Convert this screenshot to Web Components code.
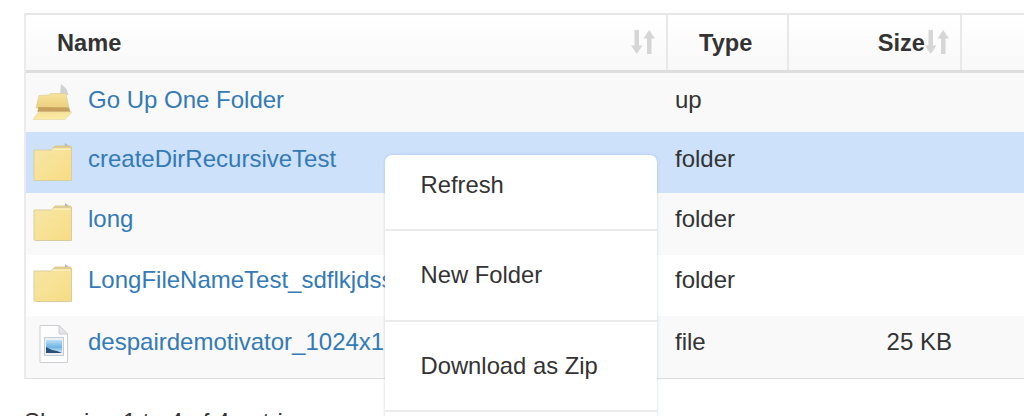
<!DOCTYPE html>
<html><head><meta charset="utf-8"><title>File browser</title>
<style>
html,body{margin:0;height:416px;overflow:hidden;background:#fff}
body{font:24px "Liberation Sans",Arial,sans-serif;color:#333}
</style></head><body>
<file-page></file-page>
<script>
const $t=(h)=>{const t=document.createElement('template');t.innerHTML=h;return t;};
const def=(n,h,init)=>customElements.define(n,class extends HTMLElement{
  constructor(){super();this.attachShadow({mode:'open'}).appendChild($t(h).content.cloneNode(true));}
  connectedCallback(){init&&init.call(this,this.shadowRoot);}
});
const FOLDER=`<svg width="42" height="42" viewBox="0 0 42 42">
<defs><linearGradient id="f1" x1="0" y1="0" x2="1" y2="1"><stop offset="0" stop-color="#f6e7a6"/><stop offset="1" stop-color="#f8dc84"/></linearGradient></defs>
<path d="M33 3l5 4 1.500 4h-7z" fill="#a9b4c6"/>
<path d="M21 8l2-2h15c.8 0 1.500.7 1.500 1.500V11H20z" fill="#f0d27a" stroke="#d5c184" stroke-width=".8"/>
<path d="M2 10h17.500l3-2.500h15.500c.8 0 1.500.7 1.500 1.500v31.500H3.500c-.8 0-1.500-.7-1.500-1.500z" fill="url(#f1)" stroke="#d8cda0" stroke-width="1"/>
<path d="M21 8.500h17v1.500H20z" fill="#fbeeb8"/>
</svg>`;
const OPEN=`<svg width="42" height="42" viewBox="0 0 42 42">
<defs><linearGradient id="o1" x1="0" y1="0" x2="0.2" y2="1"><stop offset="0" stop-color="#f8e394"/><stop offset="1" stop-color="#fbeaa6"/></linearGradient>
<linearGradient id="o2" x1="0" y1="0" x2="0" y2="1"><stop offset="0" stop-color="#f7e39a"/><stop offset="1" stop-color="#eccf7e"/></linearGradient></defs>
<path d="M29 3l5.500 5 2 6H28z" fill="#c8cad0" opacity=".85"/>
<path d="M7 14.500l10-.5 1-1.500h16l3 14.500H4z" fill="url(#o2)" stroke="#dcc98e" stroke-width=".6"/>
<path d="M6.500 26L37 26.500l1.500 4.500H5.500z" fill="#c5a15c"/>
<path d="M6.500 31h33.500l-7 7.500H1z" fill="url(#o1)" stroke="#e8dcab" stroke-width=".8"/>
</svg>`;
const IMG=`<svg width="42" height="42" viewBox="0 0 42 42">
<defs><linearGradient id="s1" x1="0" y1="0" x2="0" y2="1"><stop offset="0" stop-color="#bfe0f7"/><stop offset=".55" stop-color="#6fb3e3"/><stop offset="1" stop-color="#d8ecf8"/></linearGradient></defs>
<path d="M8 2.500h19l8.500 8.500v28.500H8z" fill="#fdfdfd" stroke="#cdcdd3"/>
<path d="M27 2.500V11h8.500z" fill="#e7e7ea" stroke="#cdcdd3"/>
<rect x="12.500" y="14.500" width="19" height="18" fill="#eef1f4" stroke="#c5ccd4"/>
<rect x="14" y="17" width="16" height="13" fill="url(#s1)"/>
<path d="M14 24l6 3 5 1 5 2H14z" fill="#2d4f74"/>
</svg>`;
const SORT=`<svg width="24" height="26" viewBox="0 0 24 26" fill="#d6d6d6">
<path d="M3.500 1h4.500v15.500h3.500L5.800 25 0 16.500h3.500z"/>
<path d="M16 25h4.500V9.500H24L18.200 1 12.500 9.500H16z"/>
</svg>`;
def('sort-icon',`<style>:host{display:inline-flex;flex:none;margin-top:-3px}</style>${SORT}`);
def('head-cell',`<style>
:host{display:flex;align-items:center;box-sizing:border-box;font-weight:700;font-size:23.6px;padding-top:2px;border-left:2px solid #e8e8e8;min-width:0}
:host([first]){border-left:0}
.t{white-space:nowrap}
.s{display:flex}
</style><span class="t"><slot></slot></span><span class="s"><slot name="icon"></slot></span>`);
def('file-icon',`<style>:host{display:inline-flex;flex:none;width:42px;height:42px;margin-top:var(--icon-shift,3px)}</style><span id="b"></span>`,function(r){
  const k=this.getAttribute('kind');r.getElementById('b').innerHTML=k==='open'?OPEN:k==='image'?IMG:FOLDER;
});
def('file-row',`<style>
:host{display:grid;box-sizing:border-box;grid-template-columns:var(--cols);align-items:center;background:#fff}
:host([striped]){background:#f9f9f9}
:host([selected]){background:#cde1fb}
.n{display:flex;align-items:center;gap:14px;padding-left:6px;min-width:0;white-space:nowrap;overflow:hidden}
a{color:#337ab7;text-decoration:none}
.ty{padding-left:9px}
.sz{padding-right:8px;text-align:right}
</style><div class="n"><slot name="icon"></slot><a href="#"><slot></slot></a></div><div class="ty" id="ty"></div><div class="sz" id="sz"></div><div></div>`,function(r){
  r.getElementById('ty').textContent=this.getAttribute('type')||'';
  r.getElementById('sz').textContent=this.getAttribute('size')||'';
});
def('file-table',`<style>
:host{display:block;--cols:640px 121px 173px 1fr;border-top:2px solid #e6e6e6;border-left:2px solid #ebebeb;border-bottom:1px solid #ddd}
.h{display:grid;grid-template-columns:var(--cols);height:55px;background:linear-gradient(#fff,#f8f8f8);border-bottom:3px solid #ddd}
</style><div class="h"><slot name="head"></slot></div><slot></slot>`);
def('menu-item',`<style>
:host{display:flex;align-items:center;box-sizing:border-box;height:90.500px;padding-left:35.500px;font-size:23.8px;border-bottom:2px solid #ebebeb;white-space:nowrap}
:host([first]){height:76px;padding-bottom:14px}
:host([last]){border-bottom:0;height:20px}
</style><slot></slot>`);
def('context-menu',`<style>
:host{display:block;position:absolute;left:385px;top:155px;width:272px;background:#fff;border-radius:7px;box-shadow:0 0 3px rgba(120,160,210,.45);color:#333}
</style><slot></slot>`);
def('file-page',`<style>
:host{display:block;position:relative;padding:13px 0 0 24px;height:403px;overflow:hidden}
.info{margin-top:29px;white-space:nowrap}
</style>
<file-table>
 <head-cell slot="head" first style="padding-left:31px;justify-content:space-between;padding-right:11px">Name<sort-icon slot="icon"></sort-icon></head-cell>
 <head-cell slot="head" style="padding-left:31px">Type</head-cell>
 <head-cell slot="head" style="justify-content:flex-end;padding-right:11px">Size<sort-icon slot="icon"></sort-icon></head-cell>
 <head-cell slot="head"></head-cell>
 <file-row striped type="up" style="height:59px;padding-bottom:5px"><file-icon slot="icon" kind="open"></file-icon>Go Up One Folder</file-row>
 <file-row selected type="folder" style="height:61px;padding-bottom:7px"><file-icon slot="icon"></file-icon>createDirRecursiveTest</file-row>
 <file-row striped type="folder" style="height:62px;padding-bottom:10px"><file-icon slot="icon"></file-icon>long</file-row>
 <file-row type="folder" style="height:61px;padding-bottom:11px"><file-icon slot="icon"></file-icon>LongFileNameTest_sdflkjdss</file-row>
 <file-row striped type="file" size="25 KB" style="height:62px;padding-bottom:10px"><file-icon slot="icon" kind="image"></file-icon>despairdemotivator_1024x1</file-row>
</file-table>
<div class="info">Showing 1 to 4 of 4 entries</div>
<context-menu>
 <menu-item first>Refresh</menu-item>
 <menu-item>New Folder</menu-item>
 <menu-item>Download as Zip</menu-item>
 <menu-item last></menu-item>
</context-menu>`);
</script>
</body></html>
